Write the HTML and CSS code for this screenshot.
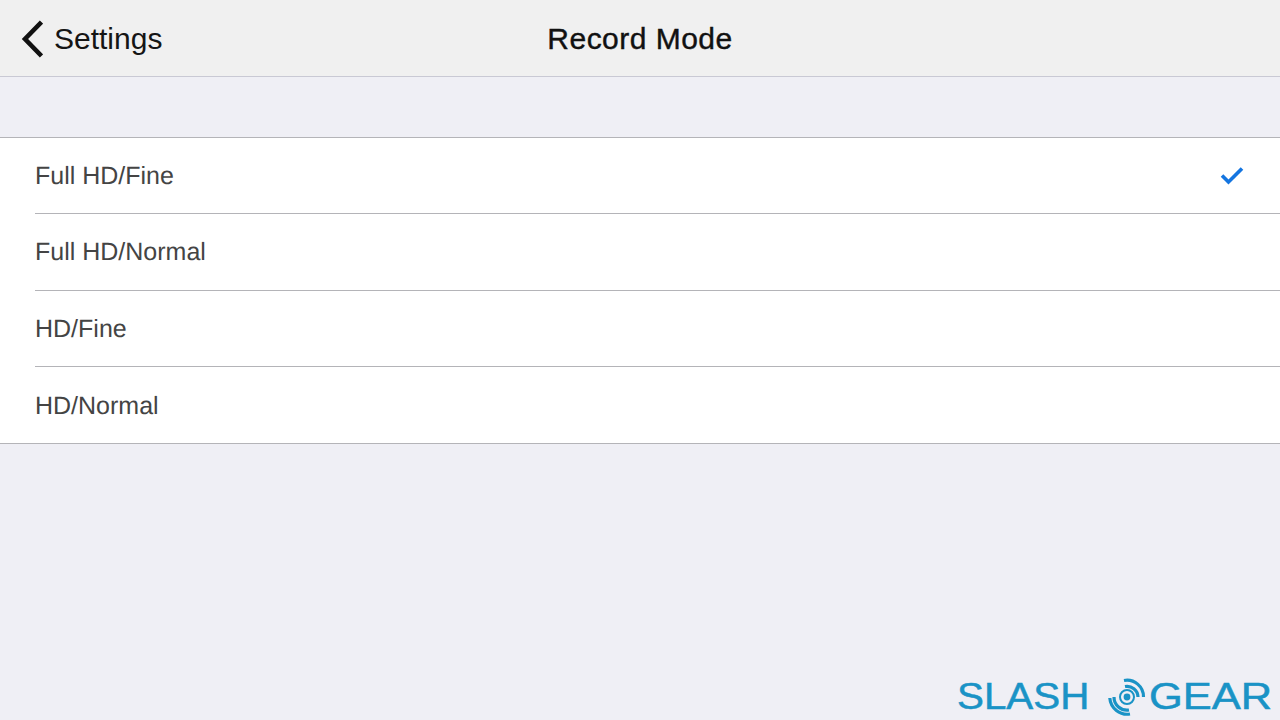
FILE: index.html
```html
<!DOCTYPE html>
<html lang="en">
<head>
<meta charset="utf-8">
<title>Record Mode</title>
<link rel="stylesheet" href="styles.css">
</head>
<body>
<div class="page">
  <header class="nav">
    <a class="back">
      <svg class="chev" width="24" height="38" viewBox="0 0 24 38"><path d="M22.500 2 6 19 22.500 36" fill="none" stroke="#111" stroke-width="4.600"/></svg>
      <span class="back-label">Settings</span>
    </a>
    <h1 class="title">Record Mode</h1>
  </header>
  <ul class="list">
    <li class="row"><div class="cell"><span>Full HD/Fine</span>
      <svg class="check" width="26" height="22" viewBox="0 0 26 22"><path d="M3 11.500 9.500 18 23 4.500" fill="none" stroke="#1475e0" stroke-width="3.600"/></svg></div></li>
    <li class="row"><div class="cell"><span>Full HD/Normal</span></div></li>
    <li class="row"><div class="cell"><span>HD/Fine</span></div></li>
    <li class="row last"><div class="cell"><span>HD/Normal</span></div></li>
  </ul>
  <div class="logo">
    <span class="logo-word logo-slash">SLASH</span>
    <svg class="logo-mark" width="40" height="40" viewBox="0 0 40 40" fill="none" stroke="#1a93c6">
      <circle cx="20" cy="20" r="3.400" fill="#1a93c6" stroke="none"/>
      <circle cx="20" cy="20" r="7" stroke-width="2"/>
      <path d="M18 9.500A11 11 0 0 1 31 20" stroke-width="3.200"/>
      <path d="M17 3.500A16.500 16.500 0 0 1 36.500 20" stroke-width="3.200"/>
      <path d="M22 33A13 13 0 0 1 7 20" stroke-width="3.200"/>
      <path d="M23 37A17.500 17.500 0 0 1 2.800 21" stroke-width="3.200"/>
    </svg>
    <span class="logo-word logo-gear">GEAR</span>
  </div>
</div>
</body>
</html>
```
FILE: styles.css
```css
* { box-sizing: border-box; }
html, body { margin: 0; padding: 0; }
body { width: 1280px; height: 720px; overflow: hidden; background: #efeff5; font-family: "Liberation Sans", Arial, sans-serif; }
.page { position: relative; width: 1280px; height: 720px; }
.nav { height: 77px; padding-top: 2px; background: #f0f0f0; border-bottom: 1px solid #c9c9d4; display: flex; align-items: center; justify-content: center; position: relative; }
.back { position: absolute; left: 19px; top: 20px; display: flex; align-items: center; gap: 11px; color: #151515; }
.chev { display: block; }
.back-label { font-size: 30px; line-height: 38px; }
.title { margin: 0; font-size: 30px; font-weight: 400; letter-spacing: 0.47px; color: #111; -webkit-text-stroke: 0.4px #111; }
.list { list-style: none; margin: 60px 0 0; padding: 0; background: #fff; border-top: 1px solid #b4b4b8; border-bottom: 1px solid #b4b4b8; }
.row { height: 76.300px; padding-left: 35px; }
.cell { height: 100%; display: flex; align-items: center; justify-content: space-between; padding: 2px 35px 0 0; border-bottom: 1px solid #b4b4b8; font-size: 25px; color: #444; text-rendering: geometricPrecision; }
.last .cell { border-bottom: 0; }
.check { display: block; margin-top: -3px; }
.logo { position: absolute; left: 957px; top: 677px; display: flex; align-items: center; color: #1a93c6; }
.logo-word { display: block; font-size: 36.500px; line-height: 40px; transform-origin: left center; -webkit-text-stroke: 0.5px #1a93c6; }
.logo-slash { width: 150px; transform: scaleX(1.105); }
.logo-mark { display: block; margin-right: 2px; }
.logo-gear { width: 124px; transform: scaleX(1.19); }
```
